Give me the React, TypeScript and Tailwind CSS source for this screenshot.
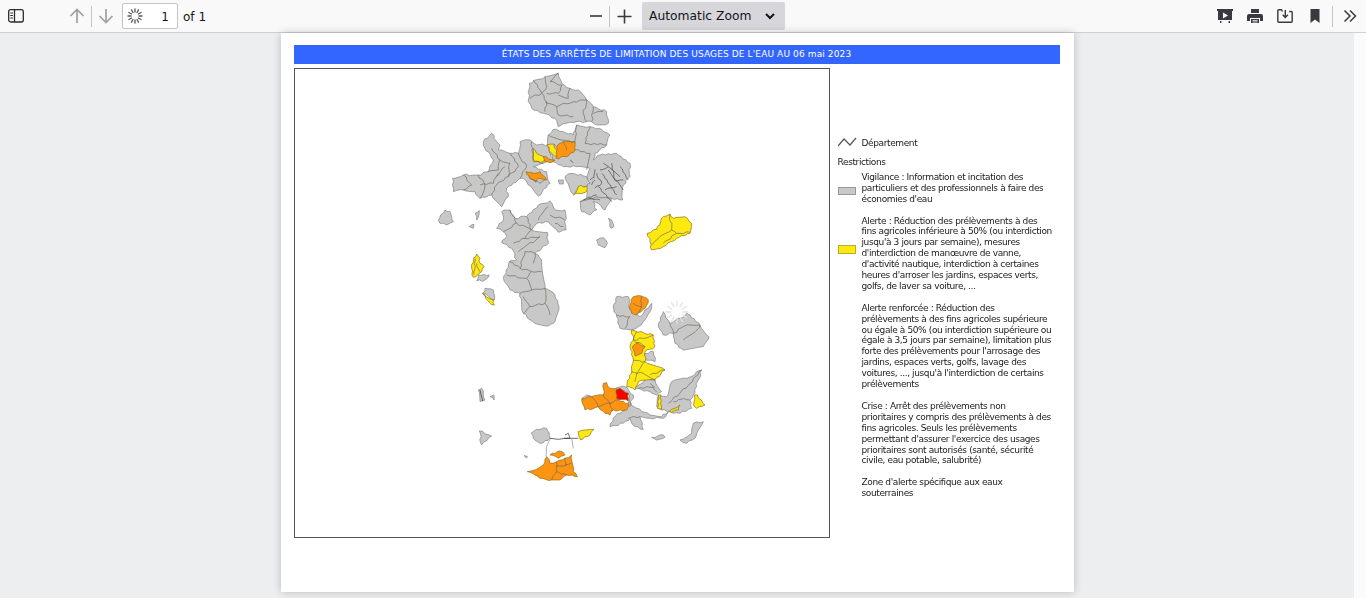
import React from "react";

// polygons are noted in the px of 3x crops of the map, each group puts them back in place
type Shape = { c: "g" | "y" | "o" | "r"; p: string };

const fills = { g: "#c8c8c8", y: "#fde910", o: "#ff9412", r: "#fb0000" };

// commune borders are never straight: cut each edge up and shake it a little
const rough = (points: string, closed: boolean, amp = 3.2) => {
  const pts = points.split(" ").map((s) => s.split(",").map(Number));
  const out: string[] = [];
  const count = closed ? pts.length : pts.length - 1;
  for (let i = 0; i < count; i++) {
    const [x1, y1] = pts[i];
    const [x2, y2] = pts[(i + 1) % pts.length];
    const len = Math.hypot(x2 - x1, y2 - y1);
    const steps = Math.max(1, Math.round(len / 9));
    for (let s = 0; s < steps; s++) {
      const t = s / steps;
      const seed = Math.sin(x1 * 12.9 + y1 * 78.2 + s * 37.7) * 43758.5;
      const j = s === 0 ? 0 : (seed - Math.floor(seed) - 0.5) * 2 * amp;
      out.push(`${(x1 + (x2 - x1) * t + (-(y2 - y1) / len) * j).toFixed(1)},${(y1 + (y2 - y1) * t + ((x2 - x1) / len) * j).toFixed(1)}`);
    }
  }
  if (!closed) out.push(pts[pts.length - 1].join(","));
  return out.join(" ");
};

const north: Shape[] = [
  { c: "g", p: "298,40 345,20 385,10 395,40 420,55 445,60 470,90 490,110 530,125 535,160 500,165 485,155 440,155 410,160 385,170 375,145 340,130 305,115 295,95" },
  { c: "g", p: "160,215 185,190 210,225 205,240 240,250 265,250 270,215 300,210 320,225 355,225 370,275 340,280 310,290 350,305 360,340 325,378 295,345 280,325 270,325 230,355 235,380 215,410 185,375 150,385 135,365 100,360 70,365 68,325 100,315 145,315 175,305 190,270 165,235" },
  { c: "g", p: "440,165 480,170 515,178 540,195 530,225 495,250 490,270 510,255 560,250 600,280 600,320 580,345 578,390 545,385 525,420 505,400 490,395 500,420 480,435 455,425 450,395 470,385 470,350 470,330 480,295 440,290 400,290 370,275 355,230 355,195 370,178 400,185 430,195" },
  { c: "g", p: "405,320 425,310 470,320 480,340 470,350 445,352 430,372 410,335" },
  { c: "g", p: "25,452 45,420 60,425 70,455 50,465 30,460" },
  { c: "g", p: "135,430 148,422 140,450" },
  { c: "g", p: "118,470 132,463 130,475" },
  { c: "g", p: "500,510 520,503 532,520 525,533 505,525" },
  { c: "g", p: "535,445 545,450 552,470 543,475 540,460" },
  { c: "g", p: "385,330 400,330 400,342 388,342" },
  { c: "y", p: "310,235 320,250 345,262 340,275 310,275" },
  { c: "o", p: "340,260 375,270 360,278 345,275" },
  { c: "y", p: "350,225 372,222 385,260 365,250" },
  { c: "o", p: "380,230 400,215 435,215 435,240 410,260 378,265" },
  { c: "o", p: "288,305 310,310 330,305 350,330 325,325 318,337 300,325" },
  { c: "y", p: "430,375 445,350 470,348 470,365 445,370" },
  { c: "y", p: "652,490 680,478 700,440 720,432 730,445 765,440 785,460 780,490 740,505 700,530 665,540 660,515" },
];

const northLines = [
  "345,20 350,50 335,70 350,95 345,125",
  "310,30 330,60 335,70 300,85",
  "385,10 360,35 395,45 385,70 350,70",
  "420,55 415,85 385,75",
  "345,95 380,110 385,135 430,140",
  "430,95 470,90 460,130 470,155",
  "380,110 400,100 430,95",
  "490,110 485,155",
  "520,125 490,130",
  "185,235 210,270 205,300 175,305",
  "210,270 240,280 235,320 200,345 185,375",
  "240,250 265,290 235,320",
  "265,250 290,290 270,325",
  "100,315 125,345 100,360",
  "145,315 165,345 150,385",
  "305,215 310,270 340,280",
  "355,195 395,210 435,215 440,165",
  "435,240 480,250 470,300",
  "480,170 465,220 530,225",
  "450,395 500,380 545,385",
  "295,320 330,340 345,330",
  "150,345 190,340 205,310",
  "225,290 200,320",
  "720,432 725,480 690,500 665,525",
  "725,480 740,490 780,487",
  "740,490 700,520",
  "400,215 410,240",
  "378,230 372,222",
];

// the dense eastern block, from a tighter crop with a darker pen
const denseLines = [
  "210,150 222,142 225,118",
  "215,165 225,150",
  "150,90 160,98",
  "205,205 240,210",
  "190,210 230,195",
  "245,130 290,195",
  "265,120 310,180",
  "235,170 275,215",
  "250,100 300,140",
  "300,110 325,150",
  "230,130 245,160 225,175",
  "275,100 285,150 310,150",
  "255,180 290,170",
  "240,120 265,110",
];

const middle: Shape[] = [
  { c: "g", p: "110,85 130,60 125,35 150,30 165,55 200,50 235,15 270,3 285,30 315,30 318,90 295,97 265,65 230,70 215,90 262,97 265,130 225,160 245,180 255,265 285,285 297,320 285,365 265,378 225,370 190,340 180,280 150,270 130,235 148,185 170,180 155,145 125,128 140,110 130,95" },
  { c: "g", p: "55,225 88,225 75,240 50,243" },
  { c: "y", p: "40,175 50,162 60,175 60,190 72,200 65,215 55,222 40,232 35,205" },
  { c: "g", p: "68,280 75,265 100,270 103,300" },
  { c: "y", p: "68,280 100,300 103,315 88,307" },
  { c: "g", p: "460,320 470,290 505,290 510,330 540,350 575,310 570,335 550,365 535,380 510,390 480,385 470,350" },
  { c: "o", p: "510,315 520,290 545,288 565,300 555,325 530,345 515,340" },
  { c: "g", p: "595,380 610,335 630,370 660,355 680,340 690,345 720,375 747,410 730,440 670,450 645,430 640,400 610,405" },
];

const middleLines = [
  "200,50 215,90",
  "235,60 265,20",
  "270,45 315,60",
  "285,70 310,80",
  "150,30 170,70 130,95",
  "170,70 215,90 195,115 160,130",
  "195,115 240,110 175,155",
  "148,185 180,205 215,215 245,215",
  "140,225 200,235 215,270 180,280",
  "215,215 200,235",
  "215,270 255,265 255,310 270,345",
  "190,290 210,320 190,340",
  "210,320 255,310",
  "180,205 195,155 225,160 220,190",
  "45,175 42,225",
  "50,190 60,215",
  "520,310 545,320",
  "545,290 545,320 530,345",
  "470,345 510,350 495,385",
  "630,370 640,400 680,375 720,375",
  "670,420 700,400 720,375",
];

const southEast: Shape[] = [
  { c: "g", p: "135,70 160,65 165,95 135,90" },
  { c: "g", p: "105,175 135,150 165,150 185,185 170,195 150,185 115,175" },
  { c: "g", p: "200,200 215,155 260,145 305,120 280,195 270,210 275,235 240,250 210,245 185,240 170,230 175,195" },
  { c: "g", p: "85,215 110,235 150,255 185,260 205,245 190,265 150,265 120,260 130,298 105,290 90,265 70,280 30,290 40,265 70,240 85,225" },
  { c: "y", p: "95,0 160,15 165,50 135,65 135,95 195,120 165,150 115,155 105,180 80,170 95,120 100,90 90,50 100,30" },
  { c: "o", p: "97,50 115,38 135,50 125,70 105,78" },
  { c: "y", p: "175,195 183,195 185,238 172,235" },
  { c: "y", p: "208,243 240,225 235,240 215,247" },
  { c: "y", p: "283,195 292,195 315,225 290,235 280,225" },
  { c: "g", p: "155,322 190,315 195,322 170,330" },
  { c: "g", p: "240,330 275,310 280,280 310,275 290,310 285,325 260,340" },
];

const southEastLines = [
  "110,5 100,30 130,25 160,15",
  "100,30 135,50",
  "135,95 110,130 105,155",
  "100,90 135,95",
  "95,125 130,130 165,150",
  "195,120 150,135",
  "205,220 270,160 305,120",
  "150,160 170,185",
  "115,175 165,170",
  "220,215 250,205 270,210",
  "85,265 120,260",
];

const south: Shape[] = [
  { c: "g", p: "335,175 350,165 365,170 350,187" },
  { c: "g", p: "440,143 465,140 490,165 480,200 475,160" },
  { c: "o", p: "335,178 365,170 400,165 400,130 410,128 420,145 440,145 445,180 475,190 470,210 430,210 420,225 405,220 385,200 345,210 340,195" },
  { c: "r", p: "438,150 450,145 475,160 475,183 440,175" },
  { c: "g", p: "28,273 65,288 35,315" },
  { c: "g", p: "25,150 35,145 45,180 30,185" },
  { c: "g", p: "60,170 72,165 72,180" },
  { c: "g", p: "183,280 200,268 230,265 240,295 210,310 190,295" },
  { c: "y", p: "325,275 372,268 360,285 332,300" },
  { c: "o", p: "172,395 205,385 220,375 230,350 240,370 260,365 285,355 305,345 310,395 322,410 290,405 270,420 245,420 210,415 195,405" },
  { c: "o", p: "240,345 270,333 285,345 265,355" },
  { c: "g", p: "162,347 172,349 170,354" },
];

const southLines = [
  "400,165 420,190 445,180",
  "365,170 385,200 420,190 425,215",
  "260,365 260,395 290,405",
  "285,355 290,375 260,378",
  "305,370 285,375",
  "245,420 260,395",
];

const blackLines = [
  "240,295 265,298 285,295 325,295",
  "285,285 295,280 300,295 282,295",
  "30,150 38,183",
];

const grayThin = ["240,297 230,320 228,350", "305,295 310,325"];

const MapGroup = ({ tx, ty, shapes, lines }: { tx: number; ty: number; shapes: Shape[]; lines: string[] }) => (
  <g transform={`translate(${tx} ${ty}) scale(0.3333)`}>
    {shapes.map((s, i) => (
      <polygon key={i} points={rough(s.p, true)} fill={fills[s.c]} stroke={s.c === "g" ? "#7d7d7d" : "#8a6a10"} strokeWidth="2" strokeLinejoin="round" />
    ))}
    {lines.map((l, i) => (
      <polyline key={i} points={rough(l, false)} fill="none" stroke="#6a6a5a" strokeWidth="2" />
    ))}
  </g>
);

const Spinner = ({ cx, cy, r1, r2, color }: { cx: number; cy: number; r1: number; r2: number; color: string }) => (
  <g stroke={color} strokeWidth="1.3" strokeLinecap="round">
    {Array.from({ length: 12 }).map((_, i) => {
      const a = (i * Math.PI) / 6;
      return <line key={i} x1={cx + r1 * Math.cos(a)} y1={cy + r1 * Math.sin(a)} x2={cx + r2 * Math.cos(a)} y2={cy + r2 * Math.sin(a)} />;
    })}
  </g>
);

const Sep = () => <div className="w-px h-[21px] bg-[#c4c4c8]" />;

const Toolbar = () => (
  <div className="h-[33px] shrink-0 bg-[#f9f9fa] border-b border-[#cfcfd4] flex items-center text-[#15141a] font-['DejaVu_Sans',sans-serif] text-[12px]">
    <div className="w-[32px] pl-[8px] flex">
      <svg width="16" height="16" viewBox="0 0 16 16" fill="none" stroke="#2b2a33" strokeWidth="1.3">
        <rect x="0.7" y="1.7" width="14.6" height="12.3" rx="2" />
        <path d="M6.5 2v12" />
        <path d="M2.3 5h2.600M2.300 7.500h2.600M2.300 10h2.600" strokeWidth="1" />
      </svg>
    </div>
    <div className="ml-[37px] w-[17px] flex">
      <svg width="16" height="16" viewBox="0 0 16 16" fill="none" stroke="#a0a0a4" strokeWidth="1.7">
        <path d="M8 15V1.500M1.500 8 8 1.500 14.500 8" />
      </svg>
    </div>
    <div className="ml-[5px]"><Sep /></div>
    <div className="ml-[6px] w-[16px] flex">
      <svg width="16" height="16" viewBox="0 0 16 16" fill="none" stroke="#a0a0a4" strokeWidth="1.7">
        <path d="M8 1v13.500M1.500 8 8 14.500 14.500 8" />
      </svg>
    </div>
    <div className="ml-[8px] w-[56px] h-[26px] bg-white border border-[#c4c4c8] rounded-[2px] flex items-center justify-between pl-[4px] pr-[8px]">
      <svg width="16" height="16" viewBox="0 0 16 16">
        <Spinner cx={8} cy={8} r1={4} r2={7} color="#555" />
      </svg>
      <span className="pt-[1px]">1</span>
    </div>
    <span className="ml-[5px] pt-[1px]">of 1</span>
    <div className="ml-[383px] w-[16px] flex">
      <svg width="14" height="14" viewBox="0 0 14 14" stroke="#3a3940" strokeWidth="1.6"><path d="M1 7h12" /></svg>
    </div>
    <div className="ml-[4px]"><Sep /></div>
    <div className="ml-[7px] flex">
      <svg width="15" height="15" viewBox="0 0 15 15" stroke="#3a3940" strokeWidth="1.6"><path d="M0.500 7.500h14M7.500 0.500v14" /></svg>
    </div>
    <div className="ml-[10px] w-[143px] h-[28px] bg-[#d7d7db] rounded-[2px] flex items-center justify-between pl-[7px] pr-[10px] text-[12.3px]">
      <span>Automatic Zoom</span>
      <svg width="10" height="8" viewBox="0 0 10 8" fill="none" stroke="#15141a" strokeWidth="2"><path d="M1 2l4 4 4-4" /></svg>
    </div>
    <div className="ml-auto flex items-center pr-[9px]">
      <div className="flex gap-[14px] items-center">
        <svg width="16" height="16" viewBox="0 0 16 16" fill="#3a3940">
          <path d="M0 1h16v2h-1v9H1V3H0z" />
          <path d="M6 4.500v6l5-3z" fill="#f9f9fa" />
          <path d="M3 13h1.400v2H3zM11.600 13H13v2h-1.400z" />
        </svg>
        <svg width="16" height="16" viewBox="0 0 16 16" fill="#3a3940">
          <path d="M4 1h8v4H4z" />
          <path d="M2 6h12a2 2 0 0 1 2 2v5h-3v-3H3v3H0V8a2 2 0 0 1 2-2z" />
          <path d="M4 11h8v4H4z" />
          <path d="M5.500 12.500h5M5.500 14h5" stroke="#f9f9fa" strokeWidth="0.8" />
        </svg>
        <svg width="16" height="16" viewBox="0 0 16 16" fill="none" stroke="#3a3940" strokeWidth="1.4">
          <path d="M5.500 3.500 4.500 1.700H1.800a1 1 0 0 0-1 1v10.600a1 1 0 0 0 1 1h12.400a1 1 0 0 0 1-1V4.500a1 1 0 0 0-1-1h-2" />
          <path d="M8.300 2v7M5.700 6.800 8.300 9.500l2.600-2.700" />
        </svg>
        <svg width="16" height="16" viewBox="0 0 16 16" fill="#3a3940">
          <path d="M3.500 1h9v14L8 11.500 3.500 15z" />
        </svg>
      </div>
      <div className="ml-[9px]"><Sep /></div>
      <div className="ml-[10px] flex">
        <svg width="14" height="14" viewBox="0 0 14 14" fill="none" stroke="#3a3940" strokeWidth="1.5">
          <path d="M1.500 1.500 7 7l-5.500 5.500M7 1.500 12.500 7 7 12.500" />
        </svg>
      </div>
    </div>
  </div>
);

const Block = ({ lines, swatch }: { lines: string[]; swatch?: React.ReactNode }) => (
  <div className="flex mb-[10.9px]">
    <div className="w-[24px] shrink-0">{swatch}</div>
    <div>
      {lines.map((l) => (
        <div key={l} className="whitespace-nowrap">{l}</div>
      ))}
    </div>
  </div>
);

const Legend = () => (
  <div className="ml-[8px] pt-[70px] text-[9px] leading-[10.9px] text-[#1a1a1a] font-['DejaVu_Sans',sans-serif] tracking-[-0.38px] blur-[0.25px]">
    <div className="flex items-center h-[11px]">
      <svg width="20" height="12" viewBox="0 0 20 12" className="shrink-0 -mt-[3px]" fill="none" stroke="#555" strokeWidth="1.2">
        <path d="M0 10 6 3l6 6 6-7" />
      </svg>
      <span className="ml-[4px]">Département</span>
    </div>
    <div className="mt-[8px] mb-[4px]">Restrictions</div>
    <Block
      lines={["Vigilance : Information et incitation des", "particuliers et des professionnels à faire des", "économies d'eau"]}
      swatch={<div className="w-[18px] h-[8px] mt-[15px] bg-[#c8c8c8] border border-[#999]" />}
    />
    <Block
      lines={[
        "Alerte : Réduction des prélèvements à des",
        "fins agricoles inférieure à 50% (ou interdiction",
        "jusqu'à 3 jours par semaine), mesures",
        "d'interdiction de manœuvre de vanne,",
        "d'activité nautique, interdiction à certaines",
        "heures d'arroser les jardins, espaces verts,",
        "golfs, de laver sa voiture, ...",
      ]}
      swatch={<div className="w-[18px] h-[9px] mt-[29px] bg-[#fde910] border border-[#b9ac30]" />}
    />
    <Block
      lines={[
        "Alerte renforcée : Réduction des",
        "prélèvements à des fins agricoles supérieure",
        "ou égale à 50% (ou interdiction supérieure ou",
        "égale à 3,5 jours par semaine), limitation plus",
        "forte des prélèvements pour l'arrosage des",
        "jardins, espaces verts, golfs, lavage des",
        "voitures, ..., jusqu'à l'interdiction de certains",
        "prélèvements",
      ]}
    />
    <Block
      lines={[
        "Crise : Arrêt des prélèvements non",
        "prioritaires y compris des prélèvements à des",
        "fins agricoles. Seuls les prélèvements",
        "permettant d'assurer l'exercice des usages",
        "prioritaires sont autorisés (santé, sécurité",
        "civile, eau potable, salubrité)",
      ]}
    />
    <Block lines={["Zone d'alerte spécifique aux eaux", "souterraines"]} />
  </div>
);

const App = () => {
  return (
    <div className="h-screen flex flex-col overflow-hidden bg-[#edeef0]">
      <Toolbar />
      <div className="flex-1 flex min-h-0">
        <div className="flex-1 flex justify-center min-w-0">
          <div className="w-[793px] h-[559px] shrink-0 bg-white shadow-[0_0_8px_rgba(0,0,0,0.22)] pt-[12px] pl-[13px]">
            <div className="w-[766px] h-[19px] bg-[#3366ff] text-white text-[9px] flex items-center justify-center font-['DejaVu_Sans',sans-serif] tracking-[0.12px]">
              ÉTATS DES ARRÊTÉS DE LIMITATION DES USAGES DE L'EAU AU 06 mai 2023
            </div>
            <div className="flex mt-[4px]">
              <div className="w-[536px] h-[470px] shrink-0 border border-[#555]">
                <svg width="534" height="468" viewBox="295 69 534 468" className="block blur-[0.3px]">
                  <MapGroup tx={430} ty={70} shapes={north} lines={northLines} />
                  <MapGroup tx={460} ty={200} shapes={middle} lines={middleLines} />
                  <MapGroup tx={600} ty={330} shapes={southEast} lines={southEastLines} />
                  <MapGroup tx={470} ty={340} shapes={south} lines={southLines} />
                  <g transform="translate(520 130) scale(0.3333)" fill="none">
                    {denseLines.map((l) => (
                      <polyline key={l} points={rough(l, false, 2.5)} stroke="#444" strokeWidth="2" />
                    ))}
                  </g>
                  <g transform="translate(470 340) scale(0.3333)" fill="none">
                    {blackLines.map((l) => (
                      <polyline key={l} points={l} stroke="#222" strokeWidth="2" />
                    ))}
                    {grayThin.map((l) => (
                      <polyline key={l} points={l} stroke="#888" strokeWidth="2" />
                    ))}
                  </g>
                  <Spinner cx={677} cy={312} r1={6} r2={11} color="#e2e2e2" />
                </svg>
              </div>
              <Legend />
            </div>
          </div>
        </div>
        <div className="w-[12px] shrink-0 bg-[#fbfbfb]" />
      </div>
    </div>
  );
};

export default App;
